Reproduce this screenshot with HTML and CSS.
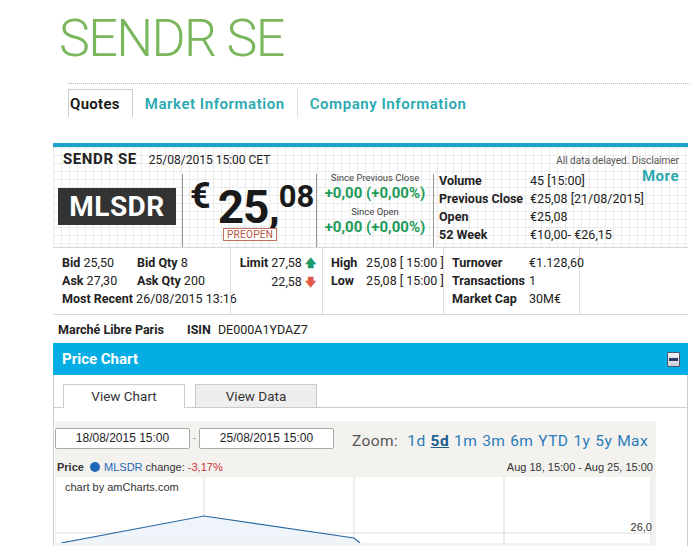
FILE: index.html
```html
<!DOCTYPE html>
<html lang="en">
<head>
    <meta charset="UTF-8">
    <meta name="viewport" content="width=device-width, initial-scale=1.0">
    <title>SENDR SE</title>
    <link rel="stylesheet" href="styles.css">
</head>
<body>

<div class="page">

    <h1 class="title">SENDR SE</h1>

    <div class="nav">
        <span class="navtab active">Quotes</span>
        <span class="navtab">Market Information</span>
        <span class="navtab last">Company Information</span>
    </div>

    <div class="quote">
        <div class="qhead">
            <span class="qname">SENDR SE</span>
            <span class="qdate">25/08/2015 15:00 CET</span>
            <span class="delayed">All data delayed. Disclaimer</span>
        </div>
        <span class="more">More</span>

        <div class="qmain">
            <div class="cell symbol">
                <div class="ticker">MLSDR</div>
            </div>
            <div class="cell price">
                <span class="euro">€</span>
                <span class="big">25,</span><span class="sup">08</span>
                <span class="preopen">PREOPEN</span>
            </div>
            <div class="cell change">
                <div class="since">Since Previous Close</div>
                <div class="green">+0,00 (+0,00%)</div>
                <div class="since">Since Open</div>
                <div class="green">+0,00 (+0,00%)</div>
            </div>
            <div class="cell stats">
                <div class="srow"><b>Volume</b><span>45 [15:00]</span></div>
                <div class="srow"><b>Previous Close</b><span>€25,08 [21/08/2015]</span></div>
                <div class="srow"><b>Open</b><span>€25,08</span></div>
                <div class="srow"><b>52 Week</b><span>€10,00- €26,15</span></div>
            </div>
        </div>
    </div>

    <div class="details">
        <div class="dcol bidask">
            <div class="drow"><span class="w75"><b>Bid</b> 25,50</span><span><b>Bid Qty</b> 8</span></div>
            <div class="drow"><span class="w75"><b>Ask</b> 27,30</span><span><b>Ask Qty</b> 200</span></div>
            <div class="drow"><span><b>Most Recent</b> 26/08/2015 13:16</span></div>
        </div>
        <div class="dcol limit">
            <div class="drow"><b>Limit</b>&nbsp;27,58 <span class="arrow up">&#129093;</span></div>
            <div class="drow">22,58 <span class="arrow down">&#129095;</span></div>
        </div>
        <div class="dcol highlow">
            <div class="drow"><b class="w32">High</b> 25,08 [ 15:00 ]</div>
            <div class="drow"><b class="w32">Low</b> 25,08 [ 15:00 ]</div>
        </div>
        <div class="dcol turnover">
            <div class="drow"><b class="w76">Turnover</b>€1.128,60</div>
            <div class="drow"><b class="w76">Transactions</b>1</div>
            <div class="drow"><b class="w76">Market Cap</b>30M€</div>
        </div>
    </div>

    <div class="market">
        <b>Marché Libre Paris</b>
        <b class="isin">ISIN</b> DE000A1YDAZ7
    </div>

    <div class="chartpanel">
        <div class="chead">
            <span>Price Chart</span>
            <span class="minbtn"></span>
        </div>
        <div class="ctabs">
            <span class="ctab on">View Chart</span>
            <span class="ctab">View Data</span>
        </div>
        <div class="chartbox">
            <div class="controls">
                <span class="dateinput">18/08/2015 15:00</span>
                <span class="dash">-</span>
                <span class="dateinput">25/08/2015 15:00</span>
                <div class="zoom">
                    Zoom:
                    <a>1d</a><a class="sel">5d</a><a>1m</a><a>3m</a><a>6m</a><a>YTD</a><a>1y</a><a>5y</a><a>Max</a>
                </div>
            </div>
            <div class="legend">
                <span><b>Price</b> <span class="dot"></span> <span class="blue">MLSDR</span> change: <span class="red">-3,17%</span></span>
                <span>Aug 18, 15:00 - Aug 25, 15:00</span>
            </div>
            <div class="plot">
                <svg width="596" height="66" viewBox="0 0 596 66">
                    <line x1="148" y1="0" x2="148" y2="66" stroke="#ddd"/>
                    <line x1="298" y1="0" x2="298" y2="66" stroke="#ddd"/>
                    <line x1="448" y1="0" x2="448" y2="66" stroke="#ddd"/>
                    <line x1="595" y1="0" x2="595" y2="66" stroke="#ddd"/>
                    <line x1="0" y1="56" x2="596" y2="56" stroke="#ddd"/>
                    <polygon points="5,66 148,39 298,61 304,66" fill="#eef4fa"/>
                    <polyline points="5,66 148,39 298,61 304,66" fill="none" stroke="#2b6aa3" stroke-width="1.2"/>
                    <text x="9" y="14" class="amc">chart by amCharts.com</text>
                    <text x="596" y="54" text-anchor="end" class="amc">26,0</text>
                </svg>
            </div>
        </div>
    </div>

</div>

</body>
</html>
```

FILE: styles.css
```css
body {
    margin: 0;
    font-family: "Roboto", "DejaVu Sans", sans-serif;
    color: #222;
    background: #ffffff;
}

.page {
    padding-left: 53px;
    width: 635px;
}

.title {
    margin: 0;
    padding: 13px 0 0 6px;
    height: 70px;
    font-size: 52px;
    line-height: 52px;
    font-weight: 300;
    color: #7ab65c;
    letter-spacing: -1.6px;
}

.nav {
    margin-left: 15px;
    width: 622px;
    border-top: 1px dotted #bbb;
    padding-top: 5px;
    display: flex;
    height: 28px;
}

.navtab {
    font-size: 15px;
    font-weight: 600;
    color: #29a9b1;
    padding: 0 12px;
    line-height: 30px;
    letter-spacing: 0.55px;
    border-right: 1px solid #ddd;
}

.navtab.active {
    color: #111;
    padding: 0 12px 0 1px;
    border: 1px solid #ccc;
    border-bottom: none;
    line-height: 29px;
    letter-spacing: 0.3px;
}

.navtab.last {
    border-right: none;
}

.quote {
    position: relative;
    margin-top: 26px;
    border-top: 4px solid #1ca2c9;
    height: 100px;
    border-bottom: 1px solid #d6d6d6;
    background-image:
        linear-gradient(#ececec 1px, transparent 1px),
        linear-gradient(90deg, #ececec 1px, transparent 1px);
    background-size: 8px 8px;
}

.qhead {
    display: flex;
    align-items: baseline;
    height: 27px;
    padding-left: 10px;
    padding-top: 3px;
    box-sizing: border-box;
}

.qname {
    font-size: 15px;
    font-weight: 700;
    letter-spacing: 0.6px;
    margin-right: 12px;
}

.qdate {
    font-size: 12px;
}

.delayed {
    margin-left: auto;
    margin-right: 9px;
    font-size: 10px;
    color: #555;
}

.more {
    position: absolute;
    right: 9px;
    top: 20px;
    font-size: 15px;
    font-weight: 700;
    color: #2aa8ae;
    letter-spacing: 0.5px;
}

.qmain {
    display: flex;
    height: 73px;
}

.cell {
    box-sizing: border-box;
}

.symbol {
    width: 129px;
    padding: 14px 0 0 5px;
}

.ticker {
    width: 118px;
    height: 37px;
    background: #333;
    color: #fff;
    font-size: 28px;
    font-weight: 700;
    text-align: center;
    line-height: 38px;
    letter-spacing: 0.5px;
}

.price {
    position: relative;
    width: 134px;
    border-left: 1px solid #999;
    padding-left: 7px;
    font-weight: 700;
    color: #1a1a1a;
}

.euro {
    display: inline-block;
    font-size: 36px;
    line-height: 36px;
    vertical-align: top;
    margin-top: 4px;
}

.big {
    display: inline-block;
    font-size: 46px;
    line-height: 38px;
    margin-top: 14px;
    margin-left: 3px;
    letter-spacing: -1px;
    vertical-align: top;
}

.sup {
    display: inline-block;
    font-size: 31px;
    line-height: 31px;
    vertical-align: top;
    margin-top: 7px;
}

.preopen {
    position: absolute;
    left: 40px;
    top: 54px;
    font-size: 10px;
    font-weight: 400;
    color: #b5533e;
    border: 1px solid #c4705f;
    background: #fff;
    padding: 0 3px;
    line-height: 11px;
    letter-spacing: 0.3px;
}

.change {
    width: 117px;
    border-left: 1px solid #999;
    text-align: center;
}

.since {
    font-size: 9.5px;
    color: #444;
    line-height: 12px;
}

.since:first-child {
    margin-top: -2px;
}

.green {
    font-size: 15px;
    font-weight: 700;
    color: #1e9b58;
    line-height: 19px;
    margin-bottom: 3px;
}

.stats {
    flex: 1;
    border-left: 1px solid #999;
    padding: 0 0 0 5px;
}

.srow {
    display: flex;
    font-size: 12.5px;
    line-height: 18px;
}

.srow:first-child {
    margin-top: -2px;
}

.srow b {
    width: 91px;
}

.details {
    display: flex;
    height: 66px;
    border-bottom: 1px solid #d6d6d6;
    width: 635px;
}

.dcol {
    box-sizing: border-box;
    padding-top: 6px;
    font-size: 12.5px;
}

.drow {
    line-height: 18px;
    white-space: nowrap;
}

.bidask {
    width: 177px;
    padding-left: 9px;
}

.w75 {
    display: inline-block;
    width: 75px;
}

.limit {
    width: 92px;
    border-left: 1px solid #ddd;
    text-align: right;
    padding-right: 6px;
}

.arrow {
    font-size: 11px;
    font-weight: 700;
}

.up {
    color: #1e9b6a;
}

.down {
    color: #e05a45;
}

.highlow {
    width: 121px;
    border-left: 1px solid #ddd;
    padding-left: 8px;
}

.w32 {
    display: inline-block;
    width: 32px;
}

.turnover {
    width: 137px;
    border-left: 1px solid #ddd;
    border-right: 1px solid #ddd;
    padding-left: 8px;
}

.w76 {
    display: inline-block;
    width: 77px;
}

.market {
    font-size: 12.5px;
    padding: 7px 0 0 5px;
    height: 21px;
}

.isin {
    margin-left: 20px;
    margin-right: 4px;
}

.chartpanel {
    border-left: 1px solid #ccc;
    border-right: 1px solid #ccc;
    height: 220px;
}

.chead {
    display: flex;
    justify-content: space-between;
    align-items: center;
    height: 32px;
    background: #04ade3;
    color: #fff;
    font-size: 15px;
    font-weight: 700;
    padding: 0 8px 0 9px;
    margin-left: -1px;
    margin-right: -1px;
}

.minbtn {
    position: relative;
    width: 11px;
    height: 13px;
    background: linear-gradient(#f4f4f4, #c9cfd8);
    border: 1px solid #4a5670;
    border-radius: 1px;
}

.minbtn::after {
    content: "";
    position: absolute;
    left: 1px;
    right: 1px;
    top: 5px;
    height: 3px;
    background: #2c3c66;
}

.ctabs {
    display: flex;
    gap: 10px;
    padding: 9px 0 0 9px;
    border-bottom: 1px solid #ccc;
}

.ctab {
    width: 120px;
    height: 22px;
    border: 1px solid #ccc;
    border-bottom: none;
    text-align: center;
    font-size: 13.5px;
    line-height: 22px;
    background: #eee;
    color: #333;
}

.ctab.on {
    background: #fff;
    height: 23px;
    margin-bottom: -1px;
}

.chartbox {
    margin: 13px 0 0 1px;
    width: 601px;
    background: #f4f2ef;
    height: 128px;
    font-family: "Liberation Sans", Arial, sans-serif;
}

.controls {
    display: flex;
    align-items: center;
    padding-top: 6px;
    height: 22px;
}

.dateinput {
    width: 133px;
    height: 19px;
    border: 1px solid #aaa;
    border-radius: 2px;
    background: #fff;
    font-size: 12px;
    text-align: center;
    line-height: 19px;
}

.dash {
    width: 9px;
    text-align: center;
    color: #aaa;
    font-size: 12px;
}

.zoom {
    margin-left: auto;
    margin-right: 8px;
    padding-top: 5px;
    font-family: "Roboto", sans-serif;
    font-size: 15.5px;
    color: #555;
    letter-spacing: 0.4px;
}

.zoom a {
    color: #2a7cb8;
    margin-left: 5px;
}

.zoom a.sel {
    font-weight: 700;
    text-decoration: underline;
    color: #1d5e92;
}

.legend {
    display: flex;
    justify-content: space-between;
    font-size: 11px;
    padding: 12px 3px 0 2px;
    height: 16px;
    color: #333;
}

.dot {
    display: inline-block;
    width: 10px;
    height: 10px;
    border-radius: 50%;
    background: #1f67b8;
    vertical-align: -1px;
    margin: 0 1px 0 3px;
}

.blue {
    color: #1f67b8;
}

.red {
    color: #cc3333;
}

.plot {
    margin-left: 1px;
    width: 596px;
    height: 66px;
    background: #fff;
}

.plot svg {
    display: block;
}

.amc {
    font-family: "Liberation Sans", Arial, sans-serif;
    font-size: 11px;
    fill: #333;
}
```
